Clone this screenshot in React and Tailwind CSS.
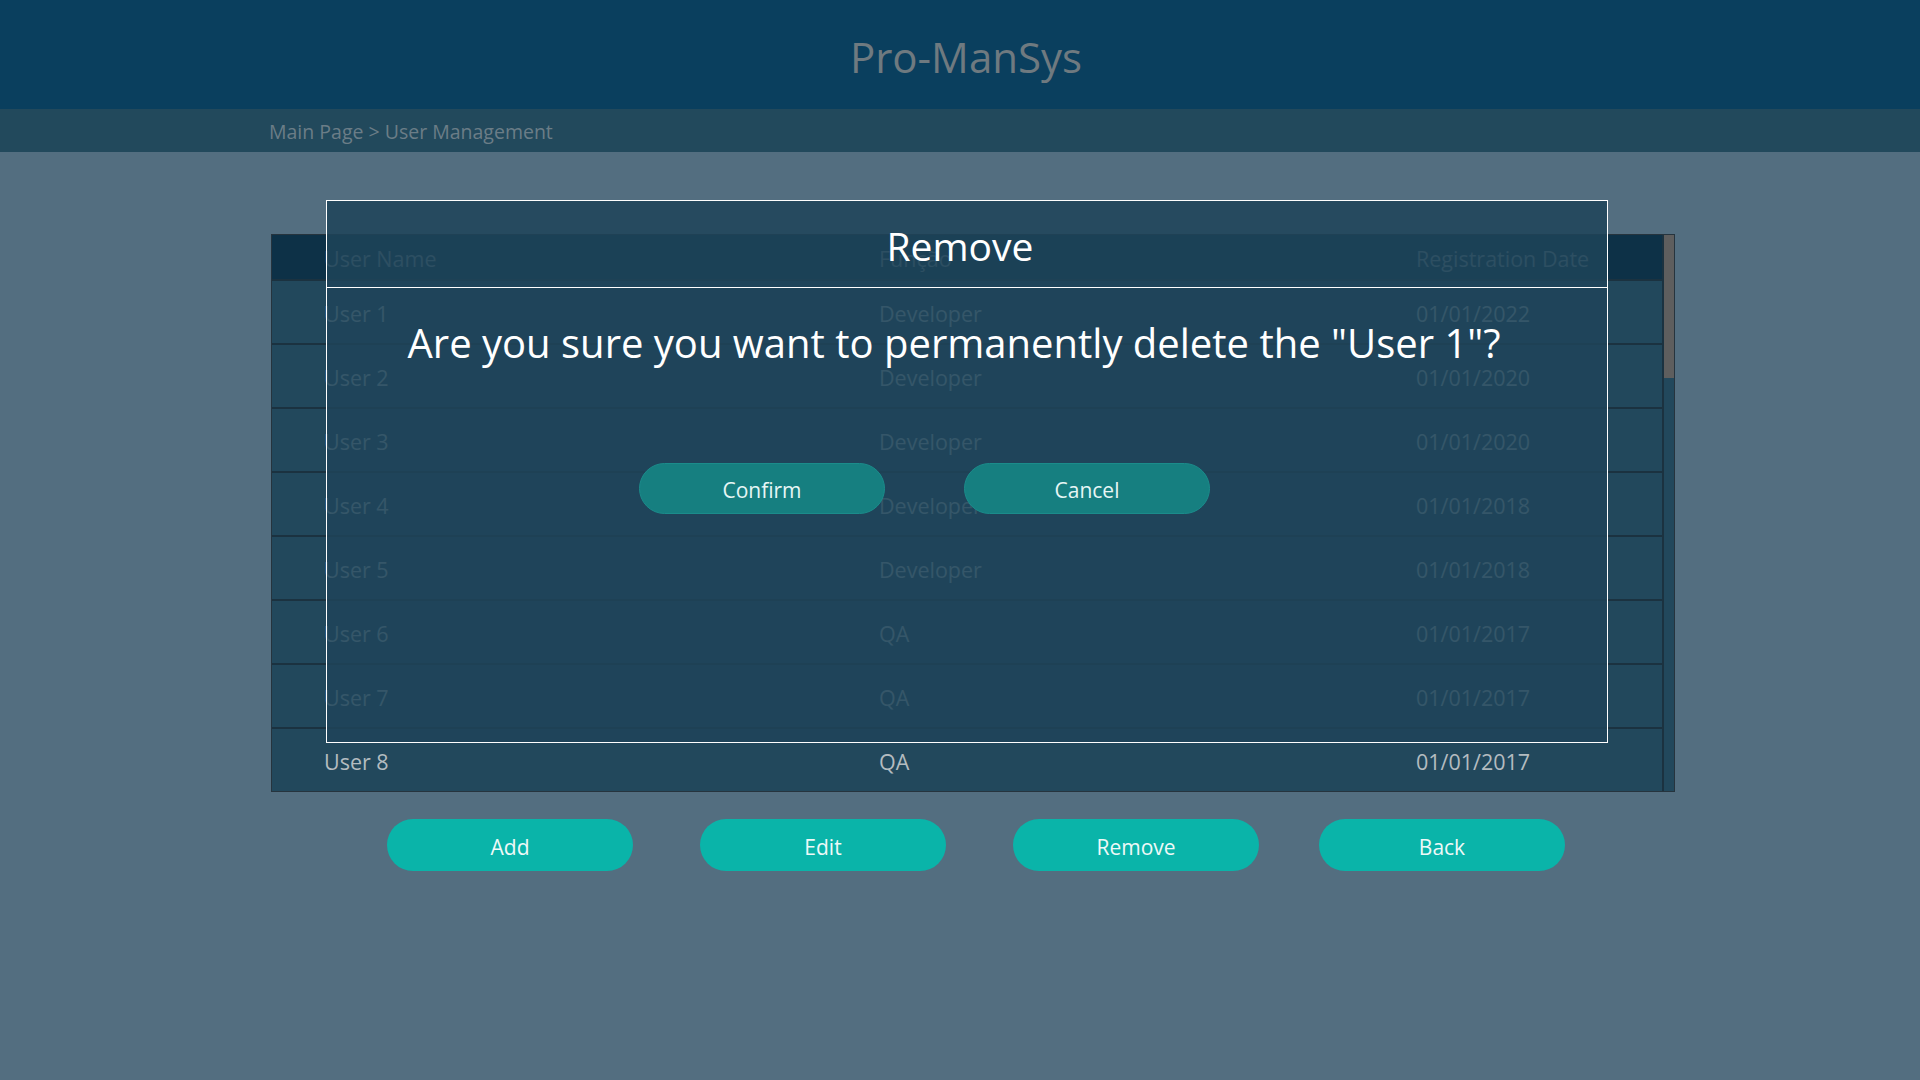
import React from "react";

const rows = [
  ["User 1", "Developer", "01/01/2022"],
  ["User 2", "Developer", "01/01/2020"],
  ["User 3", "Developer", "01/01/2020"],
  ["User 4", "Developer", "01/01/2018"],
  ["User 5", "Developer", "01/01/2018"],
  ["User 6", "QA", "01/01/2017"],
  ["User 7", "QA", "01/01/2017"],
  ["User 8", "QA", "01/01/2017"],
];

function Row({ cells }) {
  return (
    <div className="h-[64px] border-t-2 border-[#1b3240] bg-[#22485c] flex items-center pt-[5px] text-[21.5px] text-[#b4bcc0]">
      <div className="w-[554px] pl-[52px]">{cells[0]}</div>
      <div className="w-[537px] pl-[53px]">{cells[1]}</div>
      <div className="pl-[53px]">{cells[2]}</div>
    </div>
  );
}

export default function App() {
  return (
    <div className="relative min-h-screen w-full bg-[#536e80] font-['Open_Sans',sans-serif] pb-[209px]">
      <div className="h-[109px] bg-[#0a3f5e] flex items-center justify-center pt-[4px] pl-[12px]">
        <span className="text-[42px] text-[#6f7a80]">Pro-ManSys</span>
      </div>
      <div className="h-[43px] bg-[#22495c] flex items-center pl-[269px] pt-[2px]">
        <span className="text-[19.5px] text-[#6b7d87]">Main Page &gt; User Management</span>
      </div>

      <div className="ml-[271px] mt-[82px] w-[1404px] border border-[#26343e] flex">
        <div className="flex-1 flex flex-col">
          <div className="h-[44px] bg-[#0d3147] flex items-center pt-[4px] text-[21.5px] text-[#7d8b93]">
            <div className="w-[554px] pl-[52px]">User Name</div>
            <div className="w-[537px] pl-[53px]">Função</div>
            <div className="pl-[53px]">Registration Date</div>
          </div>
          {rows.map((r) => (
            <Row key={r[0]} cells={r} />
          ))}
        </div>
        <div className="w-[12px] bg-[#22485c] border-l-2 border-[#1b3240] flex flex-col">
          <div className="h-[143px] bg-[#5e5e5e]" />
        </div>
      </div>

      <div className="flex items-center mt-[27px] ml-[387px] text-[21px] text-[#eef9f8]">
        <button className="w-[246px] h-[52px] rounded-full bg-[#0ab4a9] pt-[5px]">Add</button>
        <button className="w-[246px] h-[52px] rounded-full bg-[#0ab4a9] pt-[5px] ml-[67px]">Edit</button>
        <button className="w-[246px] h-[52px] rounded-full bg-[#0ab4a9] pt-[5px] ml-[67px]">Remove</button>
        <button className="w-[246px] h-[52px] rounded-full bg-[#0ab4a9] pt-[5px] ml-[60px]">Back</button>
      </div>

      <div className="absolute left-[326px] top-[200px] w-[1282px] h-[543px] border border-white bg-[#1e4459]/[0.85] flex flex-col">
        <div className="h-[87px] border-b border-white flex items-center justify-center pr-[14px] pt-[4px]">
          <span className="text-[39px] text-white">Remove</span>
        </div>
        <div className="mt-[32px] text-center text-[40px] text-white pr-[26px] leading-[46px]">
          Are you sure you want to permanently delete the "User 1"?
        </div>
        <div className="flex mt-[97px] pl-[312px] text-[21px] text-[#e6f6f5]">
          <button className="w-[246px] h-[51px] rounded-full bg-[#167f80] border border-[#1b8c8b] pt-[5px]">Confirm</button>
          <button className="w-[246px] h-[51px] rounded-full bg-[#167f80] border border-[#1b8c8b] pt-[5px] ml-[79px]">Cancel</button>
        </div>
      </div>
    </div>
  );
}
